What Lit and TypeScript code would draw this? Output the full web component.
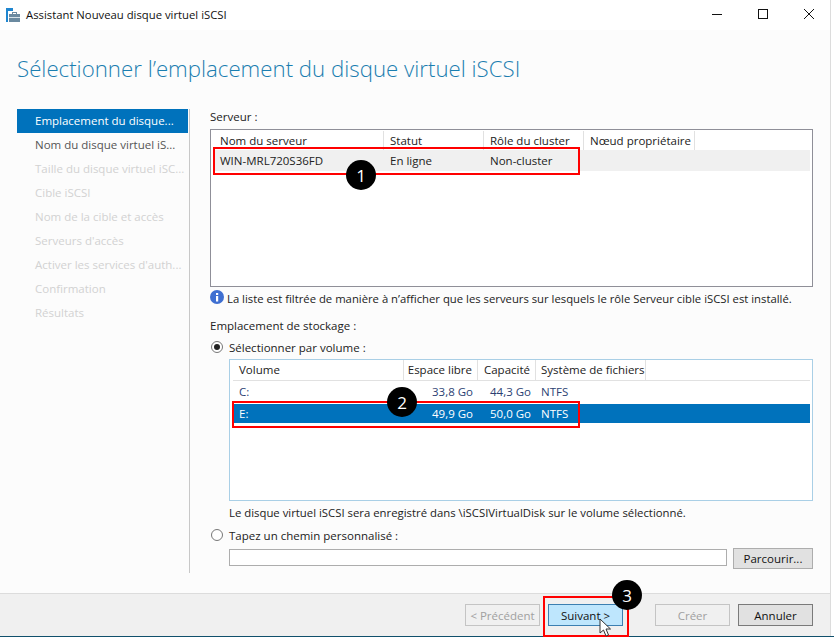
import { LitElement, html, css } from "lit";
import { customElement } from "lit/decorators.js";

const steps: [string, string][] = [
  ["Emplacement du disque...", "on"],
  ["Nom du disque virtuel iS...", "en"],
  ["Taille du disque virtuel iSC...", ""],
  ["Cible iSCSI", ""],
  ["Nom de la cible et accès", ""],
  ["Serveurs d'accès", ""],
  ["Activer les services d'auth...", ""],
  ["Confirmation", ""],
  ["Résultats", ""],
];

@customElement("app-root")
export class AppRoot extends LitElement {
  static styles = css`
    :host { display: block; width: 834px; height: 637px; position: relative; overflow: hidden;
      font-family: "Open Sans", "Noto Sans", sans-serif; font-size: 11.5px; color: #222; background: #fff; }
    .win { width: 834px; height: 637px; display: flex; flex-direction: column; box-sizing: border-box; border-bottom: 1px solid #10506c; padding-right: 3px; background: linear-gradient(to right, #fcfcfc 830px, #dcdcdc 830px, #dcdcdc 831px, #fff 831px); }
    .tb { height: 30px; flex: none; background: #fff; display: flex; align-items: center; padding-left: 6px; margin-right: 1px; }
    .tb .t { margin-left: 6px; font-size: 11.3px; margin-top: -1px; color: #111; }
    .ctl { margin-left: auto; display: flex; margin-top: -2px; margin-right: -2px; }
    .ctl svg { width: 46px; height: 16px; display: block; }
    h1 { margin: 0; height: 79px; flex: none; box-sizing: border-box; padding: 22px 0 0 17px; font-weight: 300; font-size: 22.25px; line-height: 34px; color: #1b7eb0; font-family: "Open Sans", sans-serif; }
    .main { flex: 1; display: flex; min-height: 0; }
    .side { width: 172px; margin-left: 17px; flex: none; border-right: 1px solid #c8c8c8; height: 464px; }
    .side div { height: 24px; line-height: 24px; padding-left: 18px; color: #d2d2d2; white-space: nowrap; overflow: hidden; width: 171px; box-sizing: border-box; }
    .side .on { background: #0072bc; color: #fff; }
    .side .en { color: #555; }
    .c { margin-left: 20px; width: 603px; flex: none; display: flex; flex-direction: column; }
    .lbl { height: 16px; line-height: 16px; }
    .list { border: 1px solid #8f8f98; background: #fff; box-sizing: border-box; margin-top: 4px; }
    .list.blue { border-color: #a9cfe6; }
    .hd { display: flex; height: 21px; line-height: 21px; }
    .hd span { box-sizing: border-box; padding-left: 6px; border-right: 1px solid #e1e1e1; white-space: nowrap; }
    .hd span.r { padding: 0 5px 0 0; text-align: right; }
    .row { display: flex; height: 20px; line-height: 20px; }
    .row span { box-sizing: border-box; padding-left: 6px; white-space: nowrap; }
    .row span.r { padding: 0 5px 0 0; text-align: right; }
    .srv { height: 158px; padding: 0 2px 0 3px; }
    .srv .row { background: #f0f0f0; height: 21px; line-height: 21px; }
    .srv .hd { height: 19px; line-height: 19px; padding-top: 1px; }
    .info { display: flex; align-items: flex-start; gap: 3px; height: 16px; margin-top: 3px; white-space: nowrap; font-size: 11.3px; line-height: 18px; }
    .info svg { width: 14px; height: 14px; flex: none; }
    .m { margin-top: 12px; }
    .radio { display: flex; align-items: center; gap: 6px; height: 16px; margin-top: 5px; }
    .radio i { width: 12px; height: 12px; border: 1px solid #777; border-radius: 50%; box-sizing: border-box; background: #fff; display: grid; place-items: center; margin-left: 1px; }
    .radio i b { width: 6px; height: 6px; border-radius: 50%; background: #222; }
    .radio.last { margin-top: 6px; }
    .ind { margin-left: 19px; }
    .vol { height: 142px; margin-top: 4px; padding: 0 2px 0 3px; }
    .vol .hd { height: 20px; line-height: 20px; border-bottom: 1px solid #e1e1e1; }
    .vol .row.c0 { color: #2c3f73; height: 22px; margin-top: 1px; }
    .vol .row.sel { background: #0072bc; color: #fff; height: 19px; line-height: 20px; }
    .vol .sys { padding-left: 5px; }
    .vol .col1 { width: 171px; }
    .vol .col2 { width: 74px; }
    .vol .col3 { width: 58px; padding-right: 6px; }
    .vol .col4 { width: 110px; }
    .note { margin-top: 4px; height: 16px; line-height: 16px; white-space: nowrap; font-size: 11.35px; }
    .path { display: flex; gap: 6px; margin-top: 6px; }
    .inp { width: 498px; height: 17px; border: 1px solid #adadad; background: #fff; box-sizing: border-box; }
    .btn { height: 22px; box-sizing: border-box; border: 1px solid #adadad; background: #e1e1e1; display: flex; align-items: center; justify-content: center; font-size: 11.5px; color: #111; }
    .path .btn { width: 80px; margin-top: -1px; height: 21px; }
    .ft { height: 43px; flex: none; box-sizing: border-box; background: #f0f0f0; border-top: 1px solid #dcdcdc; display: flex; align-items: flex-start; padding: 10px 0 0 465px; margin: auto 1px 0 0; }
    .ft .btn { width: 75px; }
    .ft .dis { background: #f0f0f0; border-color: #c4c4c4; color: #a0a0a0; }
    .ft .hot { background: #bee6fd; border-color: #3c7fb1; margin-left: 8px; color: #111; }
    .ft .cr { margin-left: 32px; }
    .ft .an { margin-left: 8px; border-color: #7a7a7a; }
    .red { position: absolute; border: 2px solid #f00; box-sizing: border-box; }
    .bub { position: absolute; width: 30px; height: 30px; border-radius: 50%; background: #000; color: #fff; font-size: 17px; display: grid; place-items: center; line-height: 1; }
    .cur { position: absolute; left: 599px; top: 618px; width: 14px; height: 20px; }
    .srv .c1 { width: 170px; }
    .srv .c2, .srv .c3 { width: 100px; }
    .srv .c4 { width: 111px; }
  `;

  render() {
    return html`<div class="win">
      <div class="tb">
        <svg width="14" height="14" viewBox="0 0 14 14"><path d="M0 0h7v3H2v11H0z" fill="#1f86d0"/><path d="M6 4h5v2H10V5H7v1H6z" fill="#6b8aa0"/><path d="M3 6h11v8H3z" fill="#6b8aa0"/><path d="M3 9h11v1H3z" fill="#d7e3ea"/></svg>
        <span class="t">Assistant Nouveau disque virtuel iSCSI</span>
        <div class="ctl">
          <svg viewBox="0 0 46 16"><path d="M18 8.5h10" stroke="#111" fill="none"/></svg>
          <svg viewBox="0 0 46 16"><rect x="18.5" y="3.5" width="9" height="9" stroke="#111" fill="none"/></svg>
          <svg viewBox="0 0 46 16"><path d="M18 3l10 10M28 3L18 13" stroke="#111" fill="none"/></svg>
        </div>
      </div>
      <h1>Sélectionner l’emplacement du disque virtuel iSCSI</h1>
      <div class="main">
        <div class="side">${steps.map(([s, k]) => html`<div class=${k}>${s}</div>`)}</div>
        <div class="c">
          <div class="lbl">Serveur :</div>
          <div class="list srv">
            <div class="hd">
              <span class="c1">Nom du serveur</span><span class="c2">Statut</span><span class="c3">Rôle du cluster</span><span class="c4">Nœud propriétaire</span>
            </div>
            <div class="row"><span class="c1">WIN-MRL720S36FD</span><span class="c2">En ligne</span><span class="c3">Non-cluster</span></div>
          </div>
          <div class="info">
            <svg viewBox="0 0 14 14"><circle cx="7" cy="7" r="7" fill="#3f6fd1"/><rect x="6" y="6" width="2.2" height="5.5" fill="#fff"/><rect x="6" y="3" width="2.2" height="2" fill="#fff"/></svg>
            <span>La liste est filtrée de manière à n’afficher que les serveurs sur lesquels le rôle Serveur cible iSCSI est installé.</span>
          </div>
          <div class="lbl m">Emplacement de stockage :</div>
          <div class="radio"><i><b></b></i><span>Sélectionner par volume :</span></div>
          <div class="ind">
            <div class="list blue vol">
              <div class="hd"><span class="col1">Volume</span><span class="col2 r">Espace libre</span><span class="col3 r">Capacité</span><span class="col4 sys">Système de fichiers</span></div>
              <div class="row c0"><span class="col1">C:</span><span class="col2 r">33,8 Go</span><span class="col3 r">44,3 Go</span><span class="sys">NTFS</span></div>
              <div class="row sel"><span class="col1">E:</span><span class="col2 r">49,9 Go</span><span class="col3 r">50,0 Go</span><span class="sys">NTFS</span></div>
            </div>
            <div class="note">Le disque virtuel iSCSI sera enregistré dans \\iSCSIVirtualDisk sur le volume sélectionné.</div>
          </div>
          <div class="radio last"><i></i><span>Tapez un chemin personnalisé :</span></div>
          <div class="ind path"><div class="inp"></div><div class="btn">Parcourir...</div></div>
        </div>
      </div>
      <div class="ft">
        <div class="btn dis">&lt; Précédent</div>
        <div class="btn hot">Suivant &gt;</div>
        <div class="btn dis cr">Créer</div>
        <div class="btn an">Annuler</div>
      </div>
    </div>
    <div class="red" style="left:213px;top:147px;width:367px;height:28px"></div>
    <div class="red" style="left:232px;top:401px;width:348px;height:27px"></div>
    <div class="red" style="left:543px;top:596px;width:86px;height:41px"></div>
    <div class="bub" style="left:346px;top:160px">1</div>
    <div class="bub" style="left:387px;top:387px">2</div>
    <div class="bub" style="left:612px;top:580px">3</div>
    <svg class="cur" viewBox="0 0 14 20"><path d="M1 1v14l3.5-3 2.5 6 2.5-1-2.5-6h4.5z" fill="#fff" stroke="#333"/></svg>`;
  }
}
